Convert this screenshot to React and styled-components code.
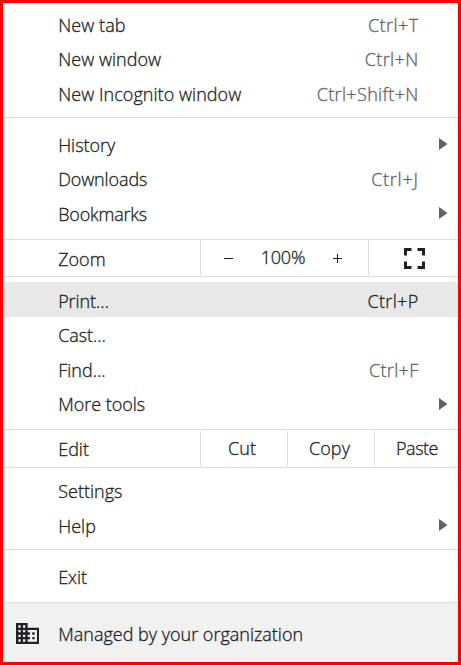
import React from 'react';
import styled, { createGlobalStyle } from 'styled-components';

const Global = createGlobalStyle`
  * { box-sizing: border-box; }
  body { margin: 0; background: #fff; }
`;

const Menu = styled.div`
  display: flex;
  flex-direction: column;
  width: 461px;
  height: 665px;
  border: 3px solid #ff0000;
  background: #fff;
  color: #202124;
  font: 300 18px/24px "Open Sans", "Noto Sans", sans-serif;
  -webkit-text-stroke: 0.3px currentColor;
  white-space: nowrap;
  overflow: hidden;
`;

const Section = styled.div`
  flex: none;
  height: ${(p) => p.$height}px;
  padding-top: ${(p) => p.$top}px;
  border-bottom: 1px solid #dadce0;
`;

const Row = styled.div`
  display: flex;
  justify-content: space-between;
  height: 34.55px;
  padding: 6.8px 39.4px 0 55.2px;
  background: ${(p) => (p.$active ? '#e8e8e8' : 'transparent')};
`;

const Text = styled.span`
  letter-spacing: ${(p) => p.$spacing || 0}px;
`;

const Shortcut = styled(Text)`
  color: ${(p) => (p.$active ? '#202124' : '#5f6368')};
`;

const Arrow = styled.svg`
  width: 9px;
  height: 12px;
  margin: 5.3px -29.4px 0 0;
  fill: #5f6368;
`;

const ControlRow = styled.div`
  display: flex;
  flex: none;
  height: ${(p) => p.$height}px;
  padding-top: ${(p) => p.$inset}px;
  padding-bottom: 1px;
  border-bottom: 1px solid #dadce0;
`;

const ControlLabel = styled.div`
  width: 197px;
  padding: ${(p) => p.$top}px 0 0 55.2px;
`;

const Control = styled.div`
  display: flex;
  justify-content: ${(p) => (p.$spread ? 'space-between' : 'center')};
  width: ${(p) => p.$width}px;
  padding: ${(p) => p.$top}px ${(p) => (p.$spread ? 26 : p.$right || 0)}px 0 ${(p) => (p.$spread ? 23 : p.$left || 0)}px;
  border-left: 1px solid #dadce0;
`;

const Sign = styled.svg`
  width: 9px;
  height: 9px;
  margin-top: 9px;
  fill: none;
  stroke: #202124;
  stroke-width: 1.1;
`;

const FullscreenIcon = styled.svg`
  width: 21px;
  height: 21px;
  fill: #202124;
`;

const Footer = styled.div`
  display: flex;
  flex: 1;
  background: #f1f1f1;
  padding-left: 12.5px;
`;

const BusinessIcon = styled.svg`
  width: 23.3px;
  height: 21px;
  margin: 19.5px 19.4px 0 0;
  fill: #202124;
`;

const FooterText = styled(Text)`
  padding-top: 19px;
`;

const sections = [
  { height: 115, top: 3, items: [
    { label: 'New tab', s: 0.08, keys: 'Ctrl+T', ks: 0.45 },
    { label: 'New window', s: 0.04, keys: 'Ctrl+N', ks: 0.4 },
    { label: 'New Incognito window', s: 0.05, keys: 'Ctrl+Shift+N', ks: 0.35 },
  ] },
  { height: 122, top: 8, items: [
    { label: 'History', s: -0.03, sub: true },
    { label: 'Downloads', s: -0.12, keys: 'Ctrl+J', ks: 0.75 },
    { label: 'Bookmarks', s: -0.2, sub: true },
  ] },
  { height: 153, top: 5, items: [
    { label: 'Print…', s: -0.1, keys: 'Ctrl+P', ks: 0.35, active: true },
    { label: 'Cast…', s: -0.1 },
    { label: 'Find…', s: 0, keys: 'Ctrl+F', ks: 0.35 },
    { label: 'More tools', s: -0.02, sub: true },
  ] },
  { height: 82, top: 4.3, items: [
    { label: 'Settings', s: 0 },
    { label: 'Help', s: 0.05, sub: true },
  ] },
  { height: 53, top: 8, items: [{ label: 'Exit', s: -0.05 }] },
];

function MenuSection({ data }) {
  return (
    <Section $height={data.height} $top={data.top}>
      {data.items.map((item) => (
        <Row key={item.label} $active={item.active}>
          <Text $spacing={item.s}>{item.label}</Text>
          {item.keys && (
            <Shortcut $active={item.active} $spacing={item.ks}>{item.keys}</Shortcut>
          )}
          {item.sub && (
            <Arrow viewBox="0 0 9 12"><path d="M0 0L8.5 6L0 12Z" /></Arrow>
          )}
        </Row>
      ))}
    </Section>
  );
}

export default function App() {
  return (
    <>
      <Global />
      <Menu>
        <MenuSection data={sections[0]} />
        <MenuSection data={sections[1]} />
        <ControlRow $height={37} $inset={0}>
          <ControlLabel $top={7}><Text>Zoom</Text></ControlLabel>
          <Control $width={168} $top={5} $spread>
            <Sign viewBox="0 0 9 9"><path d="M0 4.5H9" /></Sign>
            <Text $spacing={-0.25}>100%</Text>
            <Sign viewBox="0 0 9 9"><path d="M0 4.5H9M4.5 0V9" /></Sign>
          </Control>
          <Control $width={90} $top={7.5} $left={2}>
            <FullscreenIcon viewBox="5 5 14 14">
              <path d="M7 14H5v5h5v-2H7v-3zm-2-4h2V7h3V5H5v5zm12 7h-3v2h5v-5h-2v3zM14 5v2h3v3h2V5h-5z" />
            </FullscreenIcon>
          </Control>
        </ControlRow>
        <MenuSection data={sections[2]} />
        <ControlRow $height={38} $inset={1}>
          <ControlLabel $top={6}><Text>Edit</Text></ControlLabel>
          <Control $width={87} $top={5} $right={4}><Text>Cut</Text></Control>
          <Control $width={87} $top={5} $right={3}><Text $spacing={0.1}>Copy</Text></Control>
          <Control $width={84} $top={5} $left={1}><Text $spacing={-0.5}>Paste</Text></Control>
        </ControlRow>
        <MenuSection data={sections[3]} />
        <MenuSection data={sections[4]} />
        <Footer>
          <BusinessIcon viewBox="2 3 20 18">
            <path d="M12 7V3H2v18h20V7H12zM6 19H4v-2h2v2zm0-4H4v-2h2v2zm0-4H4V9h2v2zm0-4H4V5h2v2zm4 12H8v-2h2v2zm0-4H8v-2h2v2zm0-4H8V9h2v2zm0-4H8V5h2v2zm10 12h-8v-2h2v-2h-2v-2h2v-2h-2V9h8v10zm-2-8h-2v2h2v-2zm0 4h-2v2h2v-2z" />
          </BusinessIcon>
          <FooterText $spacing={0}>Managed by your organization</FooterText>
        </Footer>
      </Menu>
    </>
  );
}
